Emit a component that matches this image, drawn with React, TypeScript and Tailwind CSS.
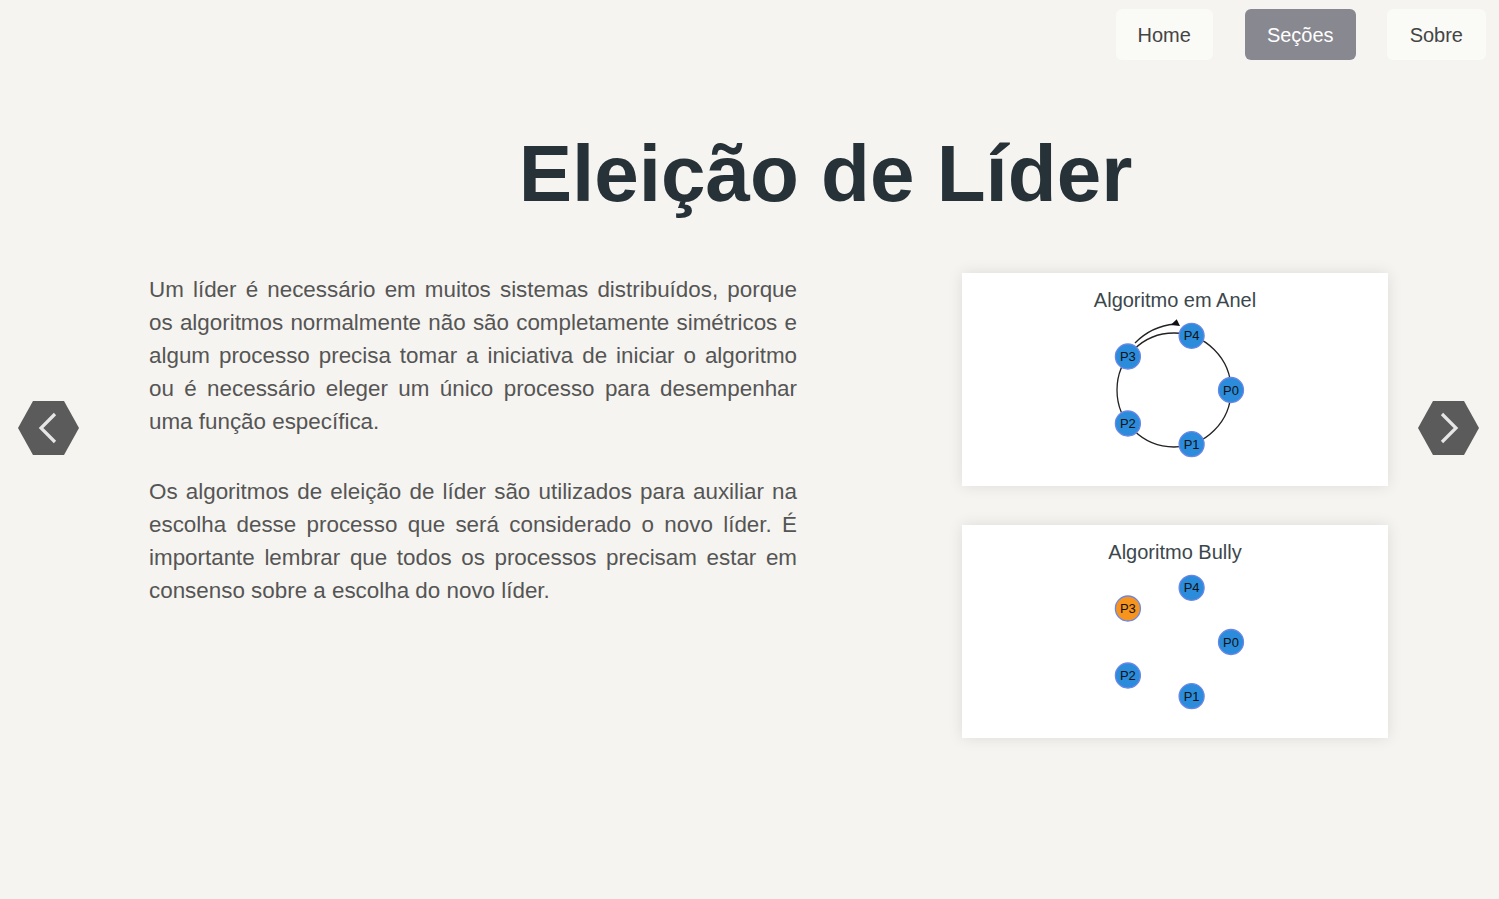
import React from 'react';

const font = { fontFamily: '"Liberation Sans", Arial, sans-serif' };

type Node = { id: string; angle: number };

const nodes: Node[] = [
  { id: 'P0', angle: 0 },
  { id: 'P1', angle: 72 },
  { id: 'P2', angle: 144 },
  { id: 'P3', angle: 216 },
  { id: 'P4', angle: 288 },
];

const CX = 212;
const CY = 76;
const R = 57;

function pos(angle: number) {
  const a = (angle * Math.PI) / 180;
  return { x: CX + R * Math.cos(a), y: CY + R * Math.sin(a) };
}

const Diagram: React.FC<{ ring?: boolean; leader?: string }> = ({ ring, leader }) => (
  <svg width="426" height="172" viewBox="0 0 426 172" className="block">
    {ring && (
      <>
        <circle cx={CX} cy={CY} r={R} fill="none" stroke="#222" strokeWidth="1.3" />
        <path d="M173 29 A 64 64 0 0 1 213 10" fill="none" stroke="#222" strokeWidth="1.3" />
        <polygon points="214.7,5.3 208.7,11 218,12" fill="#111" />
      </>
    )}
    {nodes.map((n) => {
      const p = pos(n.angle);
      return (
        <g key={n.id}>
          <circle
            cx={p.x}
            cy={p.y}
            r="12.5"
            fill={leader === n.id ? '#f7941d' : '#2a8cdb'}
            stroke="#6b86e6"
            strokeWidth="1.3"
          />
          <text x={p.x} y={p.y + 4.6} textAnchor="middle" fontSize="13" fill="#111" style={font}>
            {n.id}
          </text>
        </g>
      );
    })}
  </svg>
);

const Card: React.FC<{ title: string; children: React.ReactNode }> = ({ title, children }) => (
  <div className="w-[426px] h-[213px] bg-white shadow-[0_0_14px_rgba(0,0,0,0.10)]">
    <h3 className="pt-[13px] text-center text-[20px] leading-[28px] text-[#3b474c]">{title}</h3>
    {children}
  </div>
);

const Hex: React.FC<{ dir: 'left' | 'right' }> = ({ dir }) => (
  <button className="mt-[128px] w-[61px] h-[54px] shrink-0">
    <svg width="61" height="54" viewBox="0 0 61 54">
      <polygon points="0,27 15,0 46,0 61,27 46,54 15,54" fill="#5b5b5b" />
      <polyline
        points={dir === 'left' ? '37,13 23,27 37,41' : '24,13 38,27 24,41'}
        fill="none"
        stroke="#e6e6e6"
        strokeWidth="3.2"
      />
    </svg>
  </button>
);

const App: React.FC = () => {
  return (
    <div className="min-h-[899px] bg-[#f5f4f0]" style={font}>
      {/* Top navigation */}
      <nav className="flex justify-end pt-[9px] pr-[13px]">
        <a className="h-[51px] px-[22px] flex items-center rounded-md bg-[#fafaf7] text-[20px] text-[#444]">Home</a>
        <a className="ml-[32px] h-[51px] px-[22px] flex items-center rounded-md bg-[#888890] text-[20px] text-white">Seções</a>
        <a className="ml-[31px] h-[51px] px-[23px] flex items-center rounded-md bg-[#fafaf7] text-[20px] text-[#444]">Sobre</a>
      </nav>

      <h1 className="mt-[74px] pl-[152px] text-center text-[80px] leading-none font-bold text-[#263238]">
        Eleição de Líder
      </h1>

      <main className="mt-[59px] flex items-start px-[18px]">
        <Hex dir="left" />
        <div className="ml-[70px] w-[648px] text-justify text-[22.4px] leading-[33px] text-[#555]">
          <p>
            Um líder é necessário em muitos sistemas distribuídos, porque os algoritmos normalmente não são
            completamente simétricos e algum processo precisa tomar a iniciativa de iniciar o algoritmo ou é
            necessário eleger um único processo para desempenhar uma função específica.
          </p>
          <p className="mt-[37px]">
            Os algoritmos de eleição de líder são utilizados para auxiliar na escolha desse processo que será
            considerado o novo líder. É importante lembrar que todos os processos precisam estar em consenso sobre
            a escolha do novo líder.
          </p>
        </div>
        <div className="ml-[165px] flex flex-col gap-[39px]">
          <Card title="Algoritmo em Anel">
            <Diagram ring />
          </Card>
          <Card title="Algoritmo Bully">
            <Diagram leader="P3" />
          </Card>
        </div>
        <div className="ml-[30px]">
          <Hex dir="right" />
        </div>
      </main>
    </div>
  );
};

export default App;
